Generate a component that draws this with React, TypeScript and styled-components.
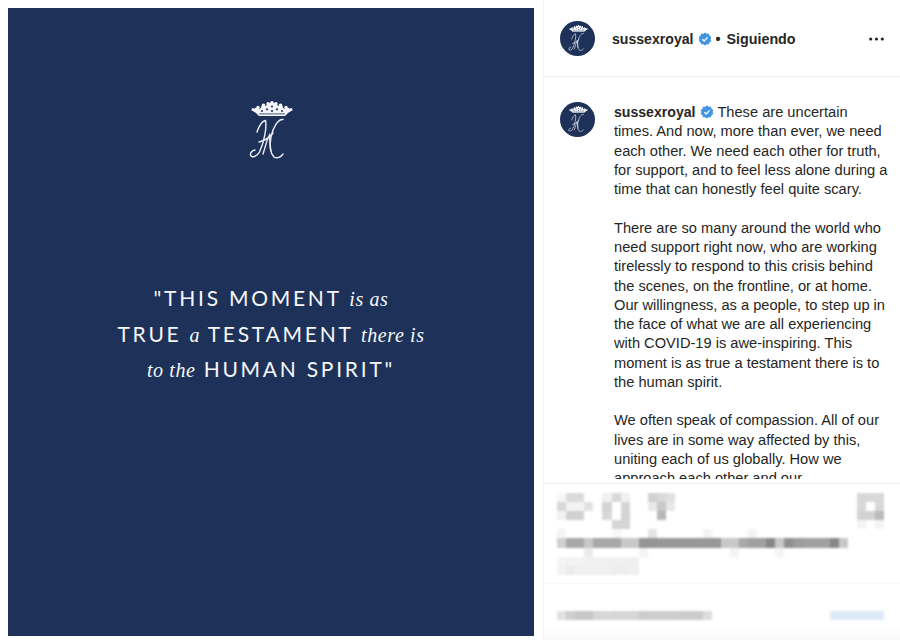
import styled, { createGlobalStyle } from "styled-components";

const GlobalStyle = createGlobalStyle`
  html, body {
    margin: 0;
    padding: 0;
    background: #fff;
  }
`;

const Page = styled.div`
  display: flex;
  width: 900px;
  height: 640px;
  overflow: hidden;
  background: #fff;
  font-family: "Liberation Sans", Arial, sans-serif;
`;

const Artwork = styled.section`
  display: flex;
  flex-direction: column;
  align-items: center;
  flex: none;
  width: 526px;
  height: 628px;
  margin: 8px 9px 4px 8px;
  padding-top: 93px;
  box-sizing: border-box;
  background: #1e3259;
  color: #fff;
`;

const Crest = styled.svg`
  display: block;
  width: 44px;
  height: 60px;
  flex: none;
`;

const Quote = styled.blockquote`
  margin: 119px 0 0;
  text-align: center;
  font-family: Lato, sans-serif;
  font-size: 21px;
  line-height: 35.6px;
  letter-spacing: 2.75px;
  color: #f6f7f9;
  white-space: nowrap;
`;

const Aside = styled.em`
  font-family: "Liberation Serif", serif;
  font-style: italic;
  font-size: 20px;
  line-height: 0;
  letter-spacing: 0.6px;
`;

const Sidebar = styled.aside`
  display: flex;
  flex-direction: column;
  flex: none;
  width: 357px;
  height: 640px;
  border-left: 1px solid #f4f4f4;
  box-sizing: border-box;
`;

const Header = styled.header`
  display: flex;
  align-items: center;
  flex: none;
  height: 77px;
  padding: 1px 16px 0 16px;
  box-sizing: border-box;
  border-bottom: 1px solid #efefef;
`;

const Avatar = styled.div`
  display: flex;
  align-items: center;
  justify-content: center;
  flex: none;
  width: 35px;
  height: 35px;
  border-radius: 50%;
  background: #1e3259;
  overflow: hidden;
`;

const AvatarCrest = styled.svg`
  display: block;
  width: 20px;
  height: 27px;
`;

const Handle = styled.span`
  font-size: 14.1px;
  font-weight: 700;
  color: #262626;
`;

const HeaderLabel = styled.div`
  display: flex;
  align-items: center;
  gap: 4px;
  margin-left: 17px;
  flex: 1;
  font-size: 14.1px;
  font-weight: 700;
  color: #262626;
`;

const Following = styled.span`
  word-spacing: 2px;
  font-size: 14.3px;
`;

const MoreIcon = styled.svg`
  display: block;
  width: 15px;
  height: 4px;
`;

const Caption = styled.div`
  display: flex;
  flex: 1;
  min-height: 0;
  gap: 19px;
  padding: 25px 10px 4px 16px;
`;

const CaptionBody = styled.div`
  flex: 1;
  overflow: hidden;
  padding-top: 1px;
  font-size: 14.65px;
  line-height: 19.28px;
  color: #262626;
`;

const Paragraph = styled.p`
  margin: 0 0 19.28px;
`;

const Badge = styled.svg`
  display: inline-block;
  width: 14px;
  height: 14px;
  vertical-align: -2px;
`;

const Footer = styled.footer`
  flex: none;
  height: 157px;
  border-top: 1px solid #efefef;
  box-sizing: border-box;
  padding-top: 9px;
  background: linear-gradient(#fff 92%, #fafafa);
`;

const Mosaic = styled.div`
  display: grid;
  grid-template-columns: repeat(36, 9.1px);
  grid-auto-rows: 9.1px;
  margin-left: 13px;
  filter: blur(0.8px);
`;

const FooterDivider = styled.div`
  height: 1px;
  margin-top: 8px;
  background: #f9f9f9;
`;

const LowerMosaic = styled(Mosaic)`
  margin-top: 27px;
`;

const Cell = styled.div<{ $shade: string }>`
  background: ${({ $shade }) => $shade};
`;

// grey level per column, 0 leaves the cell white
const gray = (v: number) => (v ? `rgb(${v},${v},${v})` : "#fff");

const upperRows: number[][] = [
  [246, 218, 218, 0, 0, 240, 216, 240, 0, 0, 208, 216, 224, 0, 0, 0, 0, 0, 0, 0, 0, 0, 0, 0, 0, 0, 0, 0, 0, 0, 0, 0, 0, 216, 216, 216],
  [216, 242, 242, 226, 0, 212, 0, 212, 0, 0, 232, 200, 232, 0, 0, 0, 0, 0, 0, 0, 0, 0, 0, 0, 0, 0, 0, 0, 0, 0, 0, 0, 0, 216, 0, 216],
  [242, 208, 208, 0, 0, 216, 0, 212, 0, 0, 0, 184, 0, 0, 0, 0, 0, 0, 0, 0, 0, 0, 0, 0, 0, 0, 0, 0, 0, 0, 0, 0, 0, 210, 210, 186],
  [0, 0, 0, 0, 0, 0, 214, 214, 0, 0, 0, 0, 0, 0, 0, 0, 0, 0, 0, 0, 0, 0, 0, 0, 0, 0, 0, 0, 0, 0, 0, 0, 0, 244, 0, 244],
  [244, 0, 0, 0, 0, 0, 248, 0, 0, 0, 228, 0, 0, 0, 0, 0, 244, 0, 0, 0, 0, 244, 0, 0, 0, 0, 0, 0, 0, 0, 0, 0, 0, 0, 0, 0],
  [208, 168, 168, 200, 168, 168, 168, 200, 200, 148, 148, 152, 152, 152, 152, 152, 152, 152, 200, 200, 168, 160, 160, 136, 200, 144, 156, 160, 160, 160, 136, 200, 0, 0, 0, 0],
  [0, 0, 0, 234, 0, 0, 0, 0, 0, 244, 0, 0, 0, 0, 0, 0, 0, 0, 0, 244, 0, 0, 0, 0, 244, 0, 0, 0, 0, 0, 0, 0, 0, 0, 0, 0],
  [244, 242, 242, 240, 240, 240, 240, 240, 240, 0, 0, 0, 0, 0, 0, 0, 0, 0, 0, 0, 0, 0, 0, 0, 0, 0, 0, 0, 0, 0, 0, 0, 0, 0, 0, 0],
  [242, 236, 240, 240, 240, 240, 238, 238, 240, 0, 0, 0, 0, 0, 0, 0, 0, 0, 0, 0, 0, 0, 0, 0, 0, 0, 0, 0, 0, 0, 0, 0, 0, 0, 0, 0],
];

const lowerRow = [226, 206, 198, 198, 214, 216, 214, 214, 214, 204, 206, 206, 206, 204, 204, 204, 222];

const crownBeads: [number, number, number][] = [
  [3, 8.5, 1.5],
  [8, 6.5, 1.700],
  [13.500, 4.200, 1.800],
  [18, 2.800, 1.700],
  [22, 1.800, 1.800],
  [26, 2.800, 1.700],
  [30.500, 4.200, 1.800],
  [36, 6.500, 1.700],
  [41, 8.500, 1.500],
];

const Monogram = () => (
  <g>
    <path
      d="M9 15 L6 12 L2 9.500 L6 6.500 L10 8 L12 4.500 L16 5 L18 2.500 L22 1.500 L26 2.500 L28 5 L32 4.500 L34 8 L38 6.500 L42 9.500 L38 12 L35 15 Z"
      fill="#f4f5f8"
    />
    {crownBeads.map(([cx, cy, r]) => (
      <circle key={cx} cx={cx} cy={cy} r={r} fill="#f4f5f8" />
    ))}
    <path d="M9 12.900 H35" stroke="#1e3259" strokeWidth="0.8" />
    <circle cx="12" cy="10" r="1" fill="#1e3259" />
    <circle cx="17" cy="8.300" r="1.100" fill="#1e3259" />
    <circle cx="22" cy="10" r="1.100" fill="#1e3259" />
    <circle cx="27" cy="8.300" r="1.100" fill="#1e3259" />
    <circle cx="32" cy="10" r="1" fill="#1e3259" />
    <circle cx="22" cy="5.400" r="1" fill="#1e3259" />
    <g fill="none" stroke="#eef1f6" strokeWidth="1.400" strokeLinecap="round">
      <path d="M7 31 C9 25 12 20 15.500 19.500 C17 27 14 41 9.500 51 C7 56 1.500 57 0.500 54 C0 52 2 49.500 5 49" />
      <path d="M33 18.500 C28 18 23 26 21 36 C19.500 44 20 52 24 56 C27 58 31 56 33 53" />
      <path d="M9 41 C14 40 19 37 23 32" />
      <path d="M13 53 C15 47 17 38 19.500 34 C20 40 20 46 21 50" />
    </g>
  </g>
);

const VerifiedBadge = () => (
  <Badge viewBox="0 0 24 24">
    <path
      d="M12 1l3 2.200 3.700-.3 1.100 3.500 3 2.200L21.600 12l1.200 3.400-3 2.200-1.100 3.500-3.700-.3L12 23l-3-2.200-3.700.3-1.100-3.500-3-2.200L2.400 12 1.200 8.600l3-2.200 1.100-3.500 3.700.3z"
      fill="#4295e2"
    />
    <path d="M7.500 12.300l3.200 3.200 5.800-6.200" fill="none" stroke="#fff" strokeWidth="2.200" />
  </Badge>
);

const CrestAvatar = () => (
  <Avatar>
    <AvatarCrest viewBox="-1 0 44 60">
      <Monogram />
    </AvatarCrest>
  </Avatar>
);

export default function App() {
  return (
    <Page>
      <GlobalStyle />
      <Artwork>
        <Crest viewBox="-1 0 44 60">
          <Monogram />
        </Crest>
        <Quote>
          "THIS MOMENT <Aside>is as</Aside>
          <br />
          TRUE <Aside>a</Aside> TESTAMENT <Aside>there is</Aside>
          <br />
          <Aside>to the</Aside> HUMAN SPIRIT"
        </Quote>
      </Artwork>
      <Sidebar>
        <Header>
          <CrestAvatar />
          <HeaderLabel>
            <span>sussexroyal</span>
            <VerifiedBadge />
            <Following>• Siguiendo</Following>
          </HeaderLabel>
          <MoreIcon viewBox="0 0 15 4">
            <circle cx="1.700" cy="2" r="1.600" fill="#262626" />
            <circle cx="7.500" cy="2" r="1.600" fill="#262626" />
            <circle cx="13.300" cy="2" r="1.600" fill="#262626" />
          </MoreIcon>
        </Header>
        <Caption>
          <CrestAvatar />
          <CaptionBody>
            <Paragraph>
              <Handle>sussexroyal</Handle> <VerifiedBadge /> These are uncertain times. And now, more
              than ever, we need each other. We need each other for truth, for support, and to feel
              less alone during a time that can honestly feel quite scary.
            </Paragraph>
            <Paragraph>
              There are so many around the world who need support right now, who are working
              tirelessly to respond to this crisis behind the scenes, on the frontline, or at home.
              Our willingness, as a people, to step up in the face of what we are all experiencing
              with COVID-19 is awe-inspiring. This moment is as true a testament there is to the
              human spirit.
            </Paragraph>
            <Paragraph>
              We often speak of compassion. All of our lives are in some way affected by this,
              uniting each of us globally. How we approach each other and our
            </Paragraph>
          </CaptionBody>
        </Caption>
        <Footer>
          <Mosaic>
            {upperRows.flatMap((row, r) =>
              row.map((v, c) => <Cell key={`${r}-${c}`} $shade={gray(v)} />)
            )}
          </Mosaic>
          <FooterDivider />
          <LowerMosaic>
            {lowerRow.map((v, c) => (
              <Cell key={c} $shade={gray(v)} />
            ))}
            {Array.from({ length: 13 }, (_, c) => (
              <Cell key={`gap-${c}`} $shade="#fff" />
            ))}
            {Array.from({ length: 6 }, (_, c) => (
              <Cell key={`link-${c}`} $shade="#dfeaf8" />
            ))}
          </LowerMosaic>
        </Footer>
      </Sidebar>
    </Page>
  );
}
